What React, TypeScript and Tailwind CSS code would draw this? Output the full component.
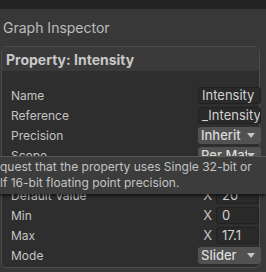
import React from 'react';

interface Row {
  label: string;
  kind: 'text' | 'drop' | 'vec' | 'check';
  value: string;
}

// the fifth row sits under the tooltip, nothing of it shows
const rows: Row[] = [
  { label: 'Name', kind: 'text', value: 'Intensity' },
  { label: 'Reference', kind: 'text', value: '_Intensity' },
  { label: 'Precision', kind: 'drop', value: 'Inherit' },
  { label: 'Scope', kind: 'drop', value: 'Per Material' },
  { label: '', kind: 'check', value: '' },
  { label: 'Default Value', kind: 'vec', value: '20' },
  { label: 'Min', kind: 'vec', value: '0' },
  { label: 'Max', kind: 'vec', value: '17.1' },
  { label: 'Mode', kind: 'drop', value: 'Slider' },
];

const Arrow: React.FC = () => (
  <svg width="8" height="5" viewBox="0 0 8 5" className="shrink-0">
    <path d="M0 0 L8 0 L4 5 Z" fill="#c4c4c4" />
  </svg>
);

const Control: React.FC<{ row: Row }> = ({ row }) => {
  if (row.kind === 'text') {
    return (
      <div className="w-[63px] h-[17px] -mr-[2px] rounded-[3px] bg-[#2a2a2a] border border-[#212121] flex items-center pl-[3px] text-[13px] text-[#d2d2d2] overflow-hidden whitespace-nowrap">
        {row.value}
      </div>
    );
  }
  if (row.kind === 'drop') {
    return (
      <div className="w-[63px] h-[17px] -mr-[2px] rounded-[3px] bg-[#515151] flex items-center pl-[3px] pr-[6px] text-[13px] font-medium text-[#dadada]">
        <span className="flex-1 overflow-hidden whitespace-nowrap">{row.value}</span>
        <Arrow />
      </div>
    );
  }
  if (row.kind === 'check') {
    return <div className="w-[14px] h-[14px] mr-[20px] rounded-[3px] bg-[#2a2a2a] border border-[#212121]" />;
  }
  return (
    <div className="flex items-center gap-[4px]">
      <span className="text-[13px] text-[#c4c4c4]">X</span>
      <div className="w-[43px] h-[17px] rounded-[3px] bg-[#2a2a2a] border border-[#212121] flex items-center pl-[5px] text-[13px] text-[#d2d2d2]">
        {row.value}
      </div>
    </div>
  );
};

const App: React.FC = () => {
  return (
    <div className="relative w-[266px] h-[272px] overflow-hidden bg-[#383838] font-['Inter',sans-serif]">
      <div className="h-[9px] bg-[#232323]" />
      <div className="h-[37px] px-[3px] flex items-center text-[14px] text-[#bdbdbd]">Graph Inspector</div>
      <div className="ml-[1px] w-[259px] rounded-[5px] border border-[#4c4c4c] bg-[#2e2e2e]">
        <div className="h-[24px] rounded-t-[4px] bg-[#3a3a3a] px-[4px] flex items-center text-[14px] font-bold text-[#c8c8c8]">
          Property: Intensity
        </div>
        <div className="pt-[16px] pb-[3px] flex flex-col gap-[3px]">
          {rows.map((row, i) => (
            <div key={i} className="h-[17px] pl-[9px] flex items-center justify-between">
              <span className="text-[12px] text-[#c4c4c4] whitespace-nowrap">{row.label}</span>
              <Control row={row} />
            </div>
          ))}
        </div>
      </div>
      <div className="absolute left-0 top-[156px] w-full h-[38px] bg-[#3c3c3c] border-t border-[#575757] shadow-[0_2px_3px_rgba(0,0,0,0.6)] pt-[2px] text-[12px] leading-[16px] text-[#c4c4c4] whitespace-nowrap">
        <div>quest that the property uses Single 32-bit or</div>
        <div>lf 16-bit floating point precision.</div>
      </div>
    </div>
  );
};

export default App;
